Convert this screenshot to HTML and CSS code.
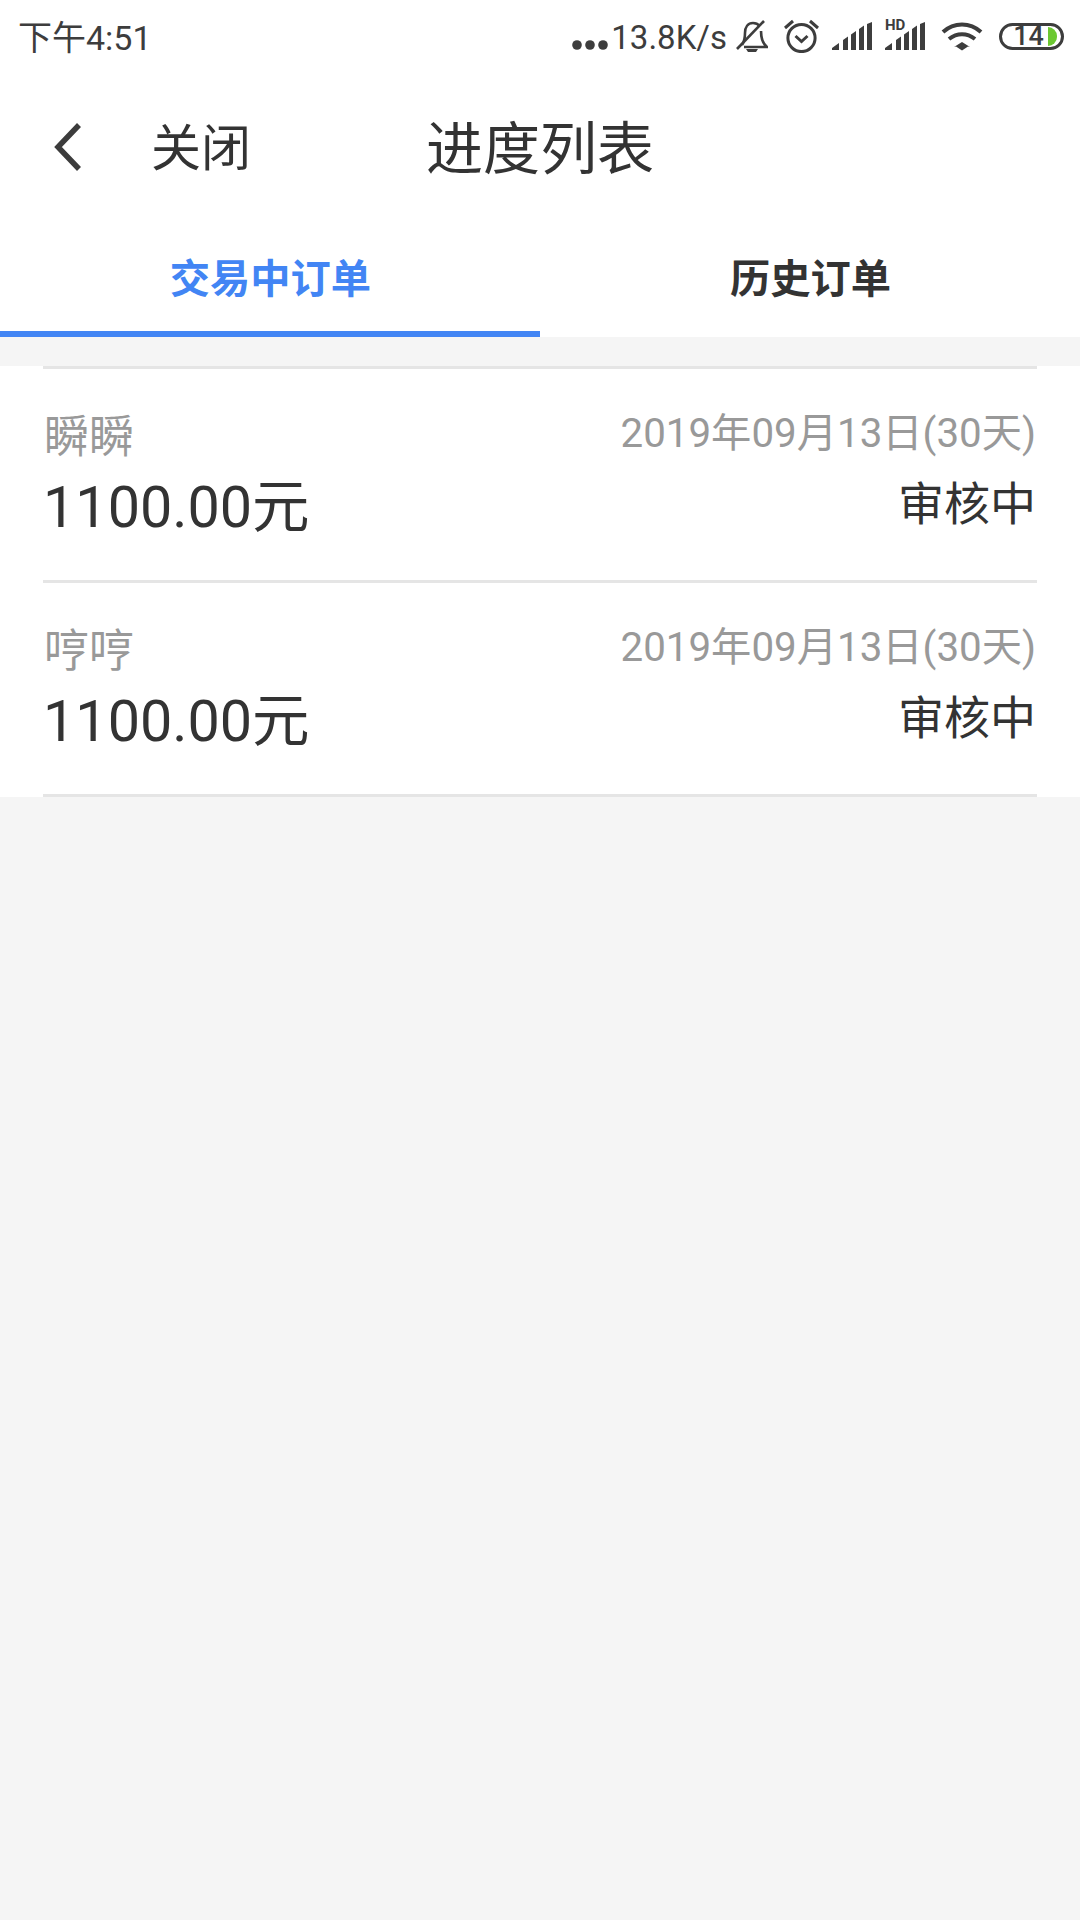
FILE: index.html
```html
<!DOCTYPE html>
<html lang="zh-CN">
<head>
    <meta charset="UTF-8">
    <meta name="viewport" content="width=device-width, initial-scale=1.0">
    <title>进度列表</title>
    <link rel="stylesheet" href="styles.css">
</head>
<body>
    <div class="status-bar">
        <span class="status-time">下午4:51</span>
        <div class="status-icons">
            <svg class="icon-dots" width="36" height="10" viewBox="0 0 36 10"><circle cx="5" cy="5" r="4.800"/><circle cx="18" cy="5" r="4.800"/><circle cx="31" cy="5" r="4.800"/></svg>
            <span class="status-speed">13.8K/s</span>
            <svg class="icon-bell" width="32" height="32" viewBox="0 0 32 32"><path d="M6 25c2-3 3-7 3-12 0-6 3-10 8-10 3 0 5 1 7 3M25 11c0 7 1 12 6 16H8" fill="none" stroke="#3d3d3d" stroke-width="2.600"/><path d="M1 29L28 1" stroke="#3d3d3d" stroke-width="2.600"/><path d="M10 29h12l-2 3h-8z"/></svg>
            <svg class="icon-alarm" width="35" height="34" viewBox="0 0 35 34"><circle cx="17.500" cy="19" r="13.600" fill="none" stroke="#3d3d3d" stroke-width="3"/><path d="M11.500 17l6 5.500 6-5.500M1 9l8-7M34 9l-8-7" fill="none" stroke="#3d3d3d" stroke-width="3"/></svg>
            <svg class="icon-signal" width="40" height="28" viewBox="0 0 40 28"><path d="M0 28v-2l7-5v7zM11 28V18l5-3.500V28zM19 28V12.500l5-3.500v19zM27 28V7l5-3.500V28zM35 28V2l5-2v28z"/></svg>
            <div class="signal-hd">
                <span class="hd-label">HD</span>
                <svg class="icon-signal" width="40" height="28" viewBox="0 0 40 28"><path d="M0 28v-2l7-5v7zM11 28V18l5-3.500V28zM19 28V12.500l5-3.500v19zM27 28V7l5-3.500V28zM35 28V2l5-2v28z"/></svg>
            </div>
            <svg class="icon-wifi" width="42" height="30" viewBox="0 0 42 30"><path d="M2 11c11-10 27-10 38 0M8 18c8-6.500 18-6.500 26 0" fill="none" stroke="#3d3d3d" stroke-width="4"/><path d="M21 21l8 5-2-0.500-6 4-6-4-2 0.500z"/></svg>
            <div class="battery">
                <span class="battery-level">14</span>
                <span class="battery-fill"></span>
            </div>
        </div>
    </div>

    <div class="nav-bar">
        <div class="nav-left">
            <svg class="icon-back" width="30" height="50" viewBox="0 0 30 50"><path d="M26 3L5 25l21 22" fill="none" stroke="#3c3c3c" stroke-width="5.500"/></svg>
            <span class="nav-close">关闭</span>
        </div>
        <h1 class="nav-title">进度列表</h1>
    </div>

    <div class="tabs">
        <div class="tab tab-active">交易中订单</div>
        <div class="tab">历史订单</div>
    </div>

    <div class="order-list">
        <div class="order-row">
            <div class="order-top">
                <span class="order-name">瞬瞬</span>
                <span class="order-date">2019年09月13日(30天)</span>
            </div>
            <div class="order-bottom">
                <span class="order-amount">1100.00元</span>
                <span class="order-status">审核中</span>
            </div>
        </div>
        <div class="order-row">
            <div class="order-top">
                <span class="order-name">哼哼</span>
                <span class="order-date">2019年09月13日(30天)</span>
            </div>
            <div class="order-bottom">
                <span class="order-amount">1100.00元</span>
                <span class="order-status">审核中</span>
            </div>
        </div>
    </div>
</body>
</html>
```

FILE: styles.css
```css
* {
    box-sizing: border-box;
}
body {
    margin: 0;
    width: 1080px;
    height: 1920px;
    background-color: #f5f5f5;
    color: #333;
    font-family: Roboto, "Noto Sans CJK SC", sans-serif;
    overflow: hidden;
}
.status-bar {
    display: flex;
    align-items: center;
    justify-content: space-between;
    height: 74px;
    padding: 0 16px 2px 18px;
    background-color: #fff;
    color: #3d3d3d;
    font-size: 34px;
}
.status-time {
    margin-bottom: 2px;
}
.status-icons {
    display: flex;
    align-items: center;
    fill: #3d3d3d;
}
.icon-dots {
    margin-top: 18px;
}
.status-speed {
    margin: 2px 9px 0 3px;
    font-size: 33px;
}
.icon-alarm {
    margin-left: 16px;
}
.icon-signal {
    display: block;
    margin-left: 13px;
}
.signal-hd {
    position: relative;
}
.hd-label {
    position: absolute;
    left: 13px;
    top: -6px;
    font-size: 15px;
    font-weight: 700;
}
.icon-wifi {
    margin-left: 16px;
}
.battery {
    position: relative;
    width: 65px;
    height: 27px;
    margin-left: 16px;
    border: 3px solid #3d3d3d;
    border-radius: 14px;
    font-size: 27px;
    line-height: 21px;
    font-weight: 500;
    text-align: center;
}
.battery-level {
    display: block;
    margin-right: 6px;
}
.battery-fill {
    position: absolute;
    right: 4px;
    top: 1px;
    width: 9px;
    height: 19px;
    border-radius: 0 10px 10px 0;
    background-color: #6cc832;
}
.nav-bar {
    display: grid;
    grid-template-columns: 1fr auto 1fr;
    align-items: center;
    height: 151px;
    padding-bottom: 12px;
    background-color: #fff;
}
.nav-left {
    display: flex;
    align-items: center;
    padding-left: 53px;
}
.icon-back {
    margin-top: 6px;
}
.nav-close {
    margin-left: 68px;
    font-size: 50px;
}
.nav-title {
    margin: 0;
    font-size: 57px;
    font-weight: 400;
}
.tabs {
    display: flex;
    height: 112px;
    background-color: #fff;
}
.tab {
    flex: 1;
    padding-top: 27px;
    padding-left: 1px;
    font-size: 40.250px;
    font-weight: 700;
    line-height: 56px;
    text-align: center;
}
.tab-active {
    color: #4285f4;
    border-bottom: 6px solid #4285f4;
}
.order-list {
    margin-top: 29px;
    padding: 0 43px;
    background-color: #fff;
}
.order-row {
    height: 214px;
    padding: 0 1px;
    border-top: 3px solid #e5e5e5;
}
.order-row:last-child {
    height: 217px;
    border-bottom: 3px solid #e5e5e5;
}
.order-top,
.order-bottom {
    display: flex;
    align-items: center;
    justify-content: space-between;
}
.order-top {
    margin-top: 34px;
    height: 60px;
}
.order-bottom {
    margin-top: 4px;
    height: 70px;
}
.order-name {
    font-size: 45px;
    color: #999;
}
.order-date {
    padding-bottom: 8px;
    font-size: 40.300px;
    color: #999;
}
.order-amount {
    margin-left: -1px;
    font-size: 57.500px;
}
.order-status {
    padding-bottom: 4px;
    font-size: 46px;
}
```
